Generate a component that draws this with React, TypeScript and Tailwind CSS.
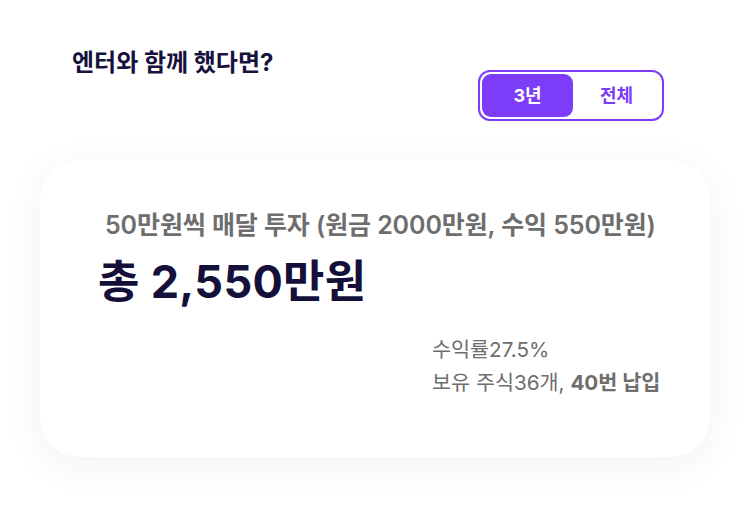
import React from "react";

const font = { fontFamily: "Inter, 'Noto Sans CJK KR', sans-serif" };

export default function App() {
  return (
    <div className="w-[750px] h-[510px] bg-white relative overflow-hidden" style={font}>
      <div className="flex justify-between pl-[72px] pr-[86px] pt-[47px]">
        <h1 className="text-[24px] leading-[32px] font-bold text-[#16123d]">엔터와 함께 했다면?</h1>
        <div className="mt-[23px] w-[186px] h-[51px] rounded-[12px] border-2 border-[#7d3cf8] p-[2px] flex">
          <button className="w-[91px] h-full rounded-[9px] bg-[#7d3cf8] text-white text-[18px] font-bold">3년</button>
          <button className="flex-1 h-full text-[#7d3cf8] text-[18px] font-bold">전체</button>
        </div>
      </div>
      <div className="mx-[40px] mt-[39px] h-[297px] rounded-[40px] bg-white shadow-[0_8px_40px_rgba(0,0,0,0.06)] flex flex-col pt-[48px] pl-[58px] pr-[47px]">
        <p className="ml-[7px] text-[25px] leading-[34px] font-semibold text-[#6e6e6e] whitespace-nowrap tracking-[-0.1px]">
          50만원씩 매달 투자 (원금 2000만원, 수익 550만원)
        </p>
        <p className="text-[45px] leading-[56px] font-bold text-[#14103a] mt-[12px] whitespace-nowrap tracking-[0.3px]">총 2,550만원</p>
        <div className="ml-[334px] mt-[23px] text-[20.7px] leading-[33px] text-[#6e6e6e] whitespace-nowrap">
          <p>수익률27.5%</p>
          <p>
            보유 주식36개, <span className="font-bold">40번 납입</span>
          </p>
        </div>
      </div>
    </div>
  );
}
